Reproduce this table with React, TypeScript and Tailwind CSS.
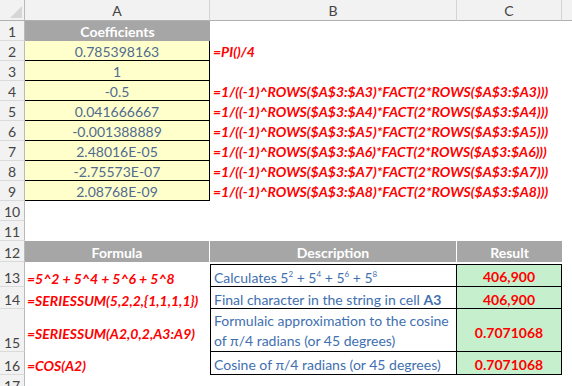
import React from 'react';

const coeffs = [
  '0.785398163',
  '1',
  '-0.5',
  '0.041666667',
  '-0.001388889',
  '2.48016E-05',
  '-2.75573E-07',
  '2.08768E-09',
];

function formulaFor(row: number) {
  if (row === 2) return '=PI()/4';
  if (row === 3) return '';
  const r = row - 1;
  return `=1/((-1)^ROWS($A$3:$A${r})*FACT(2*ROWS($A$3:$A${r})))`;
}

function RowHead({ n }: { n: number }) {
  return (
    <div className="flex items-end justify-center bg-[#f2f2f2] border-r border-r-[#b9b9b9] border-b border-b-[#dadada] text-[14px] leading-[16px] text-[#444]">
      {n}
    </div>
  );
}

function ColHead({ label }: { label: string }) {
  return (
    <div className="flex items-center justify-center bg-[#f2f2f2] border-r border-r-[#d4d4d4] border-b border-b-[#b0b0b0] text-[14px] text-[#444]">
      {label}
    </div>
  );
}

function Blank() {
  return <div />;
}

function Sup({ children }: { children: React.ReactNode }) {
  return <span className="text-[8px] align-[6px] leading-none">{children}</span>;
}

export default function App() {
  return (
    <div className="w-[572px] h-[386px] overflow-hidden bg-white font-[Lato,'Noto_Sans',sans-serif]">
      <div className="grid grid-cols-[25px_185px_247px_105px_10px] grid-rows-[21px_repeat(11,20px)_21px_25px_22px_43px_23px_20px]">
        {/* column headers */}
        <div className="relative bg-[#f2f2f2] border-r border-r-[#b9b9b9] border-b border-b-[#b0b0b0]">
          <svg className="absolute right-[2px] bottom-[2px]" width="12" height="12" viewBox="0 0 12 12">
            <path d="M12 0 L12 12 L0 12 Z" fill="#d6d6d6" />
          </svg>
        </div>
        <ColHead label="A" />
        <ColHead label="B" />
        <ColHead label="C" />
        <div className="bg-[#f2f2f2] border-b border-b-[#b0b0b0]" />

        {/* row 1 */}
        <RowHead n={1} />
        <div className="flex items-end justify-center pb-[1px] bg-[#a6a6a6] text-white font-bold text-[14px] leading-[17px]">
          Coefficients
        </div>
        <Blank />
        <Blank />
        <Blank />

        {/* rows 2-9: coefficients and their formulas */}
        {coeffs.map((v, i) => {
          const row = i + 2;
          return (
            <React.Fragment key={row}>
              <RowHead n={row} />
              <div className="flex items-end justify-center bg-[#ffffcc] border-r border-b border-black text-[14px] leading-[16px] text-[#4f6b90]">
                {v}
              </div>
              <div className="flex items-end pl-[3px] pb-[1px] whitespace-nowrap text-[14px] leading-[16px] font-bold italic text-[#f00]">
                {formulaFor(row)}
              </div>
              <Blank />
              <Blank />
            </React.Fragment>
          );
        })}

        {/* rows 10-11 */}
        <RowHead n={10} />
        <Blank />
        <Blank />
        <Blank />
        <Blank />
        <RowHead n={11} />
        <Blank />
        <Blank />
        <Blank />
        <Blank />

        {/* row 12: second table header */}
        <RowHead n={12} />
        <div className="flex items-end justify-center pb-[1px] bg-[#a6a6a6] border-r border-white text-white font-bold text-[14px] leading-[17px]">
          Formula
        </div>
        <div className="flex items-end justify-center pb-[1px] bg-[#a6a6a6] border-r border-white text-white font-bold text-[14px] leading-[17px]">
          Description
        </div>
        <div className="flex items-end justify-center pb-[1px] bg-[#a6a6a6] text-white font-bold text-[14px] leading-[17px]">
          Result
        </div>
        <Blank />

        {/* row 13 */}
        <RowHead n={13} />
        <div className="flex items-end pl-[2px] whitespace-nowrap text-[14px] leading-[16px] font-bold italic text-[#f00]">
          =5^2 + 5^4 + 5^6 + 5^8
        </div>
        <div className="flex items-end pl-[3px] mt-[2px] border border-black text-[14px] leading-[17px] text-[#4170b0]">
          <span>
            Calculates 5<Sup>2</Sup> + 5<Sup>4</Sup> + 5<Sup>6</Sup> + 5<Sup>8</Sup>
          </span>
        </div>
        <div className="flex items-end justify-center pb-[1px] mt-[2px] bg-[#c6efce] border-t border-r border-b border-black text-[14px] leading-[17px] font-bold text-[#f00]">
          406,900
        </div>
        <Blank />

        {/* row 14 */}
        <RowHead n={14} />
        <div className="flex items-end pl-[2px] whitespace-nowrap text-[14px] leading-[16px] font-bold italic text-[#f00]">
          =SERIESSUM(5,2,2,{'{'}1,1,1,1{'}'})
        </div>
        <div className="flex items-end pl-[3px] border-l border-r border-b border-black text-[14px] leading-[17px] text-[#4170b0] whitespace-nowrap">
          <span>
            Final character in the string in cell <b>A3</b>
          </span>
        </div>
        <div className="flex items-end justify-center bg-[#c6efce] border-r border-b border-black text-[14px] leading-[17px] font-bold text-[#f00]">
          406,900
        </div>
        <Blank />

        {/* row 15 */}
        <RowHead n={15} />
        <div className="flex items-center pl-[2px] pt-[6px] whitespace-nowrap text-[14px] leading-[17px] font-bold italic text-[#f00]">
          =SERIESSUM(A2,0,2,A3:A9)
        </div>
        <div className="flex flex-col justify-end pl-[3px] border-l border-r border-b border-black text-[14px] leading-[20px] text-[#4170b0] whitespace-nowrap">
          <span>Formulaic approximation to the cosine</span>
          <span>of π/4 radians (or 45 degrees)</span>
        </div>
        <div className="flex items-center justify-center pt-[5px] bg-[#c6efce] border-r border-b border-black text-[14px] leading-[17px] font-bold text-[#f00]">
          0.7071068
        </div>
        <Blank />

        {/* row 16 */}
        <RowHead n={16} />
        <div className="flex items-end pl-[2px] pb-[1px] whitespace-nowrap text-[14px] leading-[17px] font-bold italic text-[#f00]">
          =COS(A2)
        </div>
        <div className="flex items-end pl-[3px] pb-[1px] border-l border-r border-b border-black text-[14px] leading-[17px] text-[#4170b0] whitespace-nowrap">
          Cosine of π/4 radians (or 45 degrees)
        </div>
        <div className="flex items-end justify-center pb-[1px] bg-[#c6efce] border-r border-b border-black text-[14px] leading-[17px] font-bold text-[#f00]">
          0.7071068
        </div>
        <Blank />

        {/* row 17 */}
        <RowHead n={17} />
        <Blank />
        <Blank />
        <Blank />
        <Blank />
      </div>
    </div>
  );
}
